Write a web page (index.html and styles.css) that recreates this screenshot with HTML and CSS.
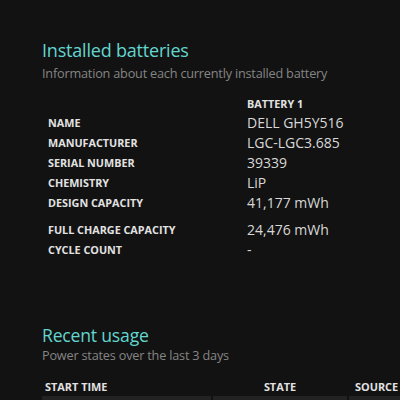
FILE: index.html
```html
<!DOCTYPE html>
<html lang="en">
<head>
    <meta charset="UTF-8">
    <meta name="viewport" content="width=device-width, initial-scale=1.0">
    <title>Battery report</title>
    <link rel="stylesheet" href="styles.css">
</head>
<body>
    <section class="section batteries">
        <h2>Installed batteries</h2>
        <p class="subtitle">Information about each currently installed battery</p>

        <table class="info-table">
            <thead>
                <tr>
                    <th></th>
                    <th class="col-head">BATTERY 1</th>
                </tr>
            </thead>
            <tbody>
                <tr><td class="label">NAME</td><td class="value">DELL GH5Y516</td></tr>
                <tr><td class="label">MANUFACTURER</td><td class="value">LGC-LGC3.685</td></tr>
                <tr><td class="label">SERIAL NUMBER</td><td class="value">39339</td></tr>
                <tr><td class="label">CHEMISTRY</td><td class="value">LiP</td></tr>
                <tr class="spaced"><td class="label">DESIGN CAPACITY</td><td class="value">41,177 mWh</td></tr>
                <tr><td class="label">FULL CHARGE CAPACITY</td><td class="value">24,476 mWh</td></tr>
                <tr><td class="label">CYCLE COUNT</td><td class="value">-</td></tr>
            </tbody>
        </table>
    </section>

    <section class="section usage">
        <h2>Recent usage</h2>
        <p class="subtitle">Power states over the last 3 days</p>

        <table class="usage-table">
            <thead>
                <tr>
                    <th class="start">START TIME</th>
                    <th class="state">STATE</th>
                    <th class="source">SOURCE</th>
                </tr>
            </thead>
            <tbody>
                <tr>
                    <td class="start">2023-04-04 12:27:56</td>
                    <td class="state">Active</td>
                    <td class="source">Battery</td>
                </tr>
            </tbody>
        </table>
    </section>
</body>
</html>
```

FILE: styles.css
```css
:root {
    --bg-color: #121212;
    --heading-color: #62d6cf;
    --sub-color: #858585;
    --label-color: #e2e2e2;
    --value-color: #d8d8d8;
    --cell-color: #222222;
}

* {
    margin: 0;
    padding: 0;
    box-sizing: border-box;
    font-family: 'Open Sans', 'Noto Sans', sans-serif;
}

html, body {
    height: 100%;
}

body {
    background-color: var(--bg-color);
    color: var(--value-color);
    overflow: hidden;
}

.section {
    padding-left: 42px;
}

.batteries {
    padding-top: 38px;
}

.usage {
    padding-top: 64px;
}

h2 {
    color: var(--heading-color);
    font-size: 18px;
    font-weight: 400;
    line-height: 24px;
    letter-spacing: -0.2px;
}

.usage h2 {
    font-size: 17.6px;
}

.subtitle {
    color: var(--sub-color);
    font-size: 12.7px;
    line-height: 16px;
    letter-spacing: -0.2px;
}

.batteries .subtitle {
    margin-top: 3px;
}

.info-table {
    border-collapse: collapse;
    margin-top: 13px;
}

.info-table th,
.info-table td {
    text-align: left;
    padding: 0;
    height: 20px;
    vertical-align: middle;
}

.info-table thead th {
    height: 18px;
}

.info-table .label {
    width: 205px;
    padding-left: 6px;
    color: var(--label-color);
    font-size: 10.8px;
    font-weight: 700;
}

.col-head {
    color: var(--label-color);
    font-size: 10.8px;
    font-weight: 700;
}

.info-table .value {
    font-size: 14px;
}

.info-table tr.spaced td {
    padding-bottom: 7px;
    height: 27px;
}

.usage-table {
    width: 391px;
    table-layout: fixed;
    border-collapse: separate;
    border-spacing: 2px 0;
    margin-left: -2px;
    margin-top: 13px;
}

.usage-table th {
    color: var(--label-color);
    font-size: 10.9px;
    font-weight: 700;
    height: 20px;
    vertical-align: middle;
    text-align: left;
    white-space: nowrap;
}

.usage-table td {
    background-color: var(--cell-color);
    height: 20px;
    font-size: 13px;
    color: var(--value-color);
    padding: 3px 3px 2px;
    white-space: nowrap;
    vertical-align: top;
}

.usage-table .start {
    width: 169px;
    padding-left: 3px;
}

.usage-table .state {
    width: 134px;
    text-align: center;
}

.usage-table .source {
    width: 80px;
    padding-left: 6px;
    text-align: left;
}
```
